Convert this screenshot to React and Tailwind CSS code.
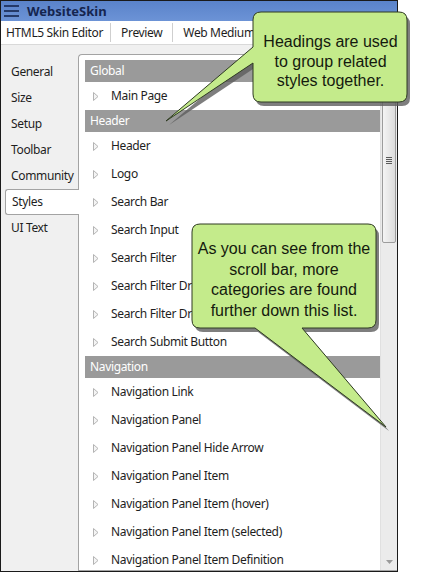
import React from 'react';

const font = { fontFamily: '"Noto Sans", "Open Sans", sans-serif' };

const navItems = ['General', 'Size', 'Setup', 'Toolbar', 'Community', 'Styles', 'UI Text'];

const sections = [
    { title: 'Global', items: ['Main Page'] },
    {
        title: 'Header',
        items: ['Header', 'Logo', 'Search Bar', 'Search Input', 'Search Filter', 'Search Filter Dropdown', 'Search Filter Dropdown Item', 'Search Submit Button']
    },
    {
        title: 'Navigation',
        items: ['Navigation Link', 'Navigation Panel', 'Navigation Panel Hide Arrow', 'Navigation Panel Item', 'Navigation Panel Item (hover)', 'Navigation Panel Item (selected)', 'Navigation Panel Item Definition']
    }
];

const Arrow = () => (
    <svg width="6" height="9" viewBox="0 0 6 9" className="shrink-0">
        <path d="M0.5 0.5 L5 4.5 L0.5 8.5 Z" fill="#f4f4f4" stroke="#b4b4b4" strokeWidth="1" />
    </svg>
);

const Callouts = () => (
    <>
        <svg width="423" height="573" className="absolute left-0 top-0 pointer-events-none">
            <g transform="translate(3 4)" fill="#5e5e5e" opacity="0.8">
                <path d="M261 12 H399 Q407 12 407 20 V94 Q407 102 399 102 H261 Q253 102 253 94 V63 L166 121 L253 47 V20 Q253 12 261 12 Z" />
                <path d="M200 224 H368 Q376 224 376 232 V320 Q376 328 368 328 H302 L386 427 L255 328 H200 Q192 328 192 320 V232 Q192 224 200 224 Z" />
            </g>
            <path d="M261 12 H399 Q407 12 407 20 V94 Q407 102 399 102 H261 Q253 102 253 94 V63 L166 121 L253 47 V20 Q253 12 261 12 Z" fill="#c4eb8b" stroke="#2e3a22" strokeWidth="1" />
            <path d="M200 224 H368 Q376 224 376 232 V320 Q376 328 368 328 H302 L386 427 L255 328 H200 Q192 328 192 320 V232 Q192 224 200 224 Z" fill="#c4eb8b" stroke="#2e3a22" strokeWidth="1" />
        </svg>
        <div className="absolute left-[254px] top-[32px] w-[153px] text-center text-[16px] leading-[19.5px] text-[#141a0e]" style={{ fontFamily: '"Liberation Sans", Arial, sans-serif' }}>
            Headings are used<br />to group related<br />styles together.
        </div>
        <div className="absolute left-[192px] top-[239px] w-[184px] text-center text-[16px] leading-[20.6px] text-[#141a0e]" style={{ fontFamily: '"Liberation Sans", Arial, sans-serif' }}>
            As you can see from the<br />scroll bar, more<br />categories are found<br />further down this list.
        </div>
    </>
);

export default function App() {
    return (
        <div className="relative w-[423px] h-[573px] bg-white overflow-hidden" style={font}>
            <div className="w-[398px] h-[572px] border border-[#1a1a1a] flex flex-col bg-[#f0f0f0] overflow-hidden">
                {/* title bar */}
                <div className="h-[20px] shrink-0 flex items-center gap-[7px] pl-[3px] bg-gradient-to-b from-[#5a83ca] to-[#6c93d6]">
                    <svg width="16" height="14" viewBox="0 0 16 14">
                        <g stroke="#16264f" strokeWidth="1.6">
                            <line x1="0" y1="2" x2="15" y2="2" />
                            <line x1="0" y1="7" x2="15" y2="7" />
                            <line x1="0" y1="12" x2="15" y2="12" />
                        </g>
                    </svg>
                    <span className="text-[13px] font-bold text-[#15254f] leading-none">WebsiteSkin</span>
                </div>

                {/* tab bar */}
                <div className="h-[24px] shrink-0 flex items-center bg-white border-b border-[#d9d9d9] text-[12px] tracking-[-0.35px] text-[#1e1e1e]">
                    <span className="pl-[5px] pr-[7px]">HTML5 Skin Editor</span>
                    <span className="w-px h-[19px] bg-[#cfcfcf]" />
                    <span className="px-[10px]">Preview</span>
                    <span className="w-px h-[19px] bg-[#cfcfcf]" />
                    <span className="pl-[10px] whitespace-nowrap">Web Medium</span>
                </div>

                {/* body */}
                <div className="flex-1 flex pt-[9px] min-h-0">
                    <div className="w-[77px] shrink-0 pt-[5px] text-[12px] tracking-[-0.35px] text-[#1e1e1e]">
                        {navItems.map((n) => (
                            n === 'Styles' ? (
                                <div key={n} className="relative z-10 ml-[4px] mr-[-1px] h-[26px] flex items-center pl-[6px] bg-white border border-r-0 border-[#a3a3a3] rounded-l-[3px]">
                                    {n}
                                </div>
                            ) : (
                                <div key={n} className="h-[26px] flex items-center pl-[10px]">{n}</div>
                            )
                        ))}
                    </div>

                    <div className="flex-1 flex bg-white border-l border-t border-b border-[#a3a3a3] rounded-tl-[4px] pl-[6px] pt-[5px] min-w-0">
                        <div className="flex-1 min-w-0 overflow-hidden text-[12px] tracking-[-0.35px] text-[#1e1e1e]">
                            {sections.map((s) => (
                                <div key={s.title}>
                                    <div className="h-[22px] flex items-center pl-[5px] bg-[#9a9a9a] text-white">{s.title}</div>
                                    {s.items.map((it) => (
                                        <div key={it} className="h-[28px] flex items-center pl-[8px] gap-[12px] whitespace-nowrap">
                                            <Arrow />
                                            <span>{it}</span>
                                        </div>
                                    ))}
                                </div>
                            ))}
                        </div>

                        {/* scroll bar */}
                        <div className="w-[17px] shrink-0 flex flex-col bg-[#ebebeb] border-l border-[#e0e0e0]">
                            <div className="h-[17px] flex items-center justify-center">
                                <svg width="7" height="4" viewBox="0 0 7 4"><path d="M0 4 L3.5 0 L7 4 Z" fill="#9a9a9a" /></svg>
                            </div>
                            <div className="mx-[1px] h-[166px] rounded-[2px] border border-[#9c9c9c] bg-gradient-to-r from-[#f4f4f4] to-[#dcdcdc] flex items-center justify-center">
                                <svg width="6" height="8" viewBox="0 0 6 8">
                                    <g stroke="#5a5a5a" strokeWidth="1">
                                        <line x1="0" y1="1.5" x2="6" y2="1.5" />
                                        <line x1="0" y1="3.5" x2="6" y2="3.5" />
                                        <line x1="0" y1="5.5" x2="6" y2="5.5" />
                                        <line x1="0" y1="7.5" x2="6" y2="7.5" />
                                    </g>
                                </svg>
                            </div>
                            <div className="flex-1" />
                            <div className="h-[17px] flex items-center justify-center">
                                <svg width="7" height="4" viewBox="0 0 7 4"><path d="M0 0 L3.5 4 L7 0 Z" fill="#9a9a9a" /></svg>
                            </div>
                        </div>
                    </div>
                </div>
            </div>

            <Callouts />
        </div>
    );
}
